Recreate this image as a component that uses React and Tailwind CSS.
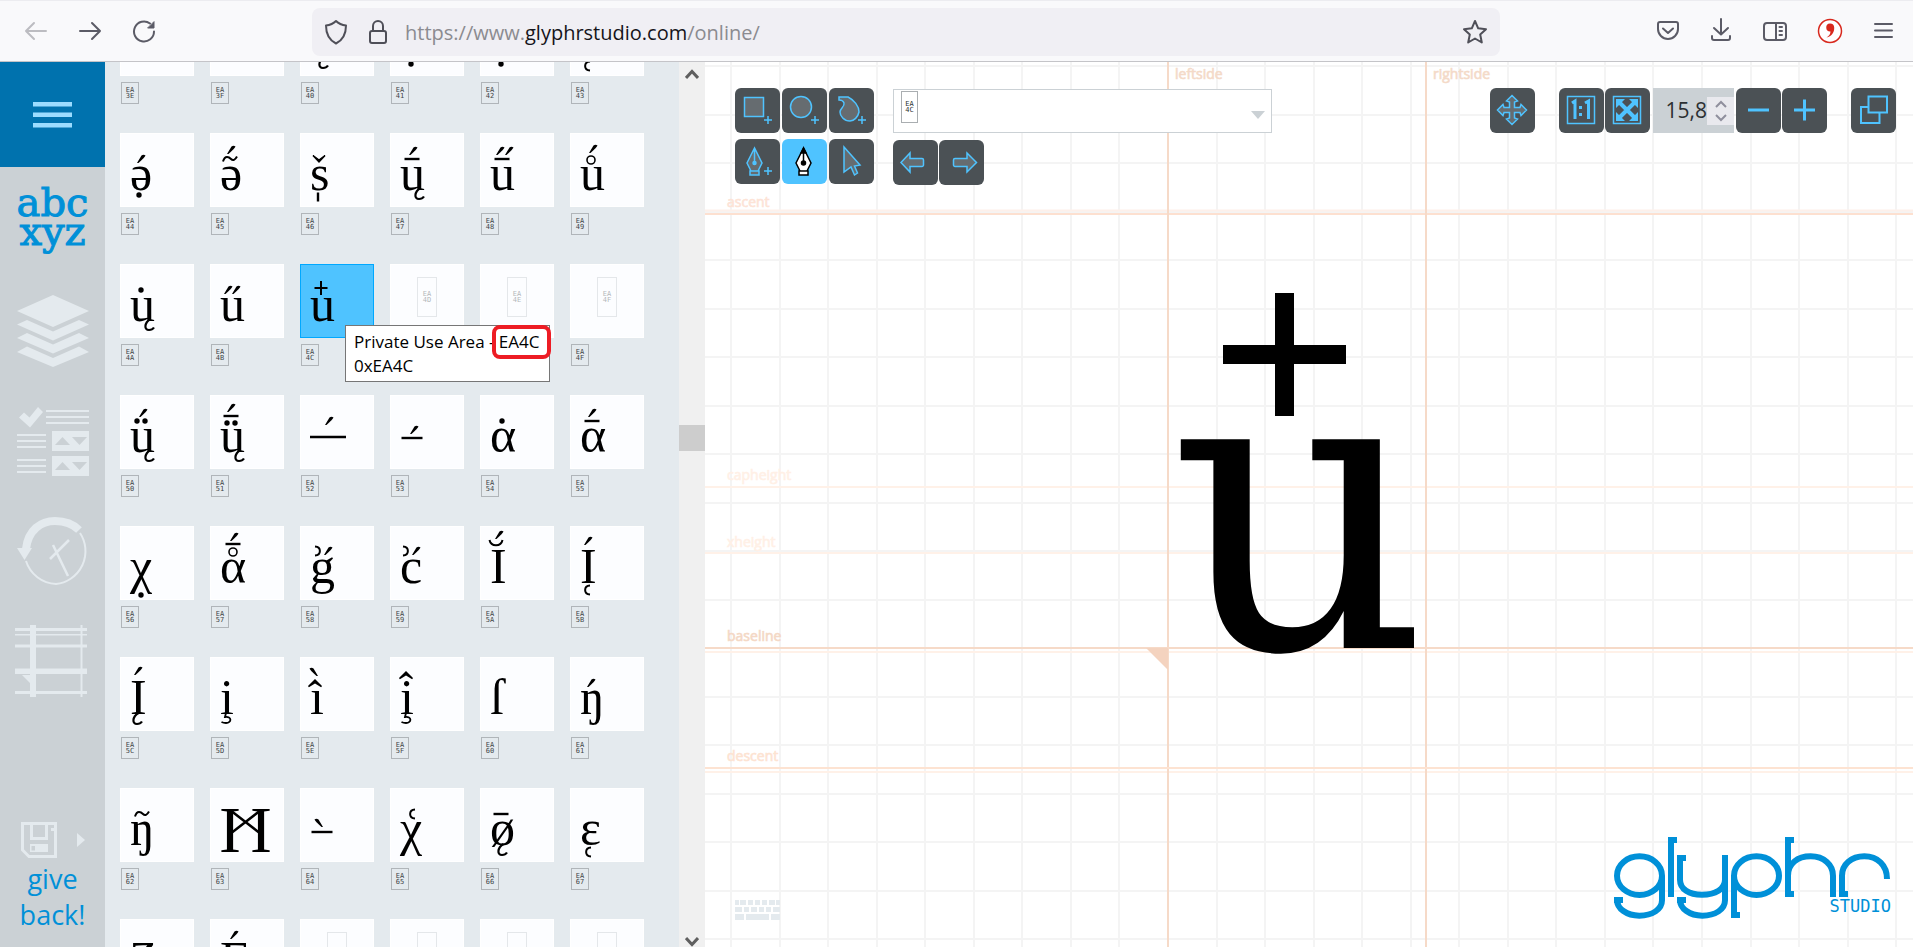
import React from "react";

const FONT = "font-['Open_Sans','Noto_Sans',sans-serif]";

// Diacritic shapes, drawn around their own centre.
const markShapes = {
  acute: <path d="M-4 4L0.500 -3.500Q2.500 -5 4.500 -3.500Q4 -2 -2.500 4Z" />,
  grave: <path d="M4 4L-0.500 -3.500Q-2.500 -5 -4.500 -3.500Q-4 -2 2.500 4Z" />,
  macron: <path d="M-7.500 -1.200H7.500V1.200H-7.500Z" />,
  dot: <circle r="2.700" />,
  ring: <circle r="4" fill="none" stroke="#000" strokeWidth="1.600" />,
  plus: <path d="M-6.500 0H6.500M0 -7V7" fill="none" stroke="#000" strokeWidth="2" />,
  bar: <path d="M-1.200 -4.500H1.200V4.500H-1.200Z" />,
  tilde: <path d="M-7 2.500C-5 -4 -1 -2 1 0C3 2 5 1 7 -2.500" fill="none" stroke="#000" strokeWidth="2" />,
  caron: <path d="M-6 -3.500L0 3L6 -3.500L0 1Z" stroke="#000" strokeWidth="1.500" />,
  hat: <path d="M-6.500 3.500L0 -3L6.500 3.500L0 -0.500Z" stroke="#000" strokeWidth="1.500" />,
  breve: <path d="M-6.500 -3C-5 4 5 4 6.500 -3" fill="none" stroke="#000" strokeWidth="2" />,
  ogonek: <path d="M1.500 -6C-5 -2 -5 5 0 5C2.500 5 4 4 5 2.500" fill="none" stroke="#000" strokeWidth="2.200" />,
  cedilla: <path d="M0 -5L-1 -1C6 -2 6 5 0 5C-2 5 -3.500 4.500 -4.500 4" fill="none" stroke="#000" strokeWidth="1.800" />,
  halfLeft: <path d="M3 -4.500C-3.500 -4 -3.500 4 3 4.500" fill="none" stroke="#000" strokeWidth="2" />,
  halfRight: <path d="M-3 -4.500C3.500 -4 3.500 4 -3 4.500" fill="none" stroke="#000" strokeWidth="2" />,
  longDash: <path d="M-18 -1.300H18V1.300H-18Z" />,
  dash: <path d="M-10.500 -1.200H10.500V1.200H-10.500Z" />,
};

const glyphs = {
  0xea3e: { marks: [] },
  0xea3f: { marks: [] },
  0xea40: { marks: [["ogonek", 23, 61]] },
  0xea41: { marks: [["dot", 21, 62]] },
  0xea42: { marks: [["dot", 21, 62]] },
  0xea43: { marks: [["halfLeft", 17, 64]] },
  0xea44: { base: "ə", marks: [["acute", 21, 26], ["dot", 19, 62]] },
  0xea45: { base: "ə", marks: [["acute", 21, 17], ["tilde", 20, 26]] },
  0xea46: { base: "s", marks: [["caron", 19, 26], ["bar", 18, 64]] },
  0xea47: { base: "u", marks: [["acute", 23, 18], ["macron", 22, 26], ["ogonek", 29, 61]] },
  0xea48: { base: "u", marks: [["acute", 20, 18], ["acute", 29, 18], ["macron", 22, 26]] },
  0xea49: { base: "u", marks: [["acute", 23, 16], ["ring", 21, 27]] },
  0xea4a: { base: "u", marks: [["dot", 21, 26], ["ogonek", 29, 61]] },
  0xea4b: { base: "u", marks: [["acute", 18, 26], ["acute", 26, 26]] },
  0xea4c: { base: "u", marks: [["plus", 21, 24]] },
  0xea50: { base: "u", marks: [["acute", 23, 18], ["dot", 17, 26], ["dot", 25, 26], ["ogonek", 29, 61]] },
  0xea51: { base: "u", marks: [["acute", 21, 13], ["macron", 21, 21], ["dot", 17, 28], ["dot", 25, 28], ["ogonek", 29, 61]] },
  0xea52: { marks: [["acute", 29, 26], ["longDash", 28, 42]] },
  0xea53: { marks: [["acute", 24, 35], ["dash", 22, 43]] },
  0xea54: { base: "α", marks: [["dot", 22, 26]] },
  0xea55: { base: "α", marks: [["acute", 22, 18], ["macron", 22, 26]] },
  0xea56: { base: "χ", marks: [["dot", 21, 69]] },
  0xea57: { base: "α", marks: [["acute", 24, 11], ["macron", 23, 18], ["ring", 23, 26]] },
  0xea58: { base: "g", marks: [["halfRight", 18, 25], ["acute", 28, 25]] },
  0xea59: { base: "c", marks: [["halfRight", 16, 25], ["acute", 26, 25]] },
  0xea5a: { base: "I", marks: [["acute", 19, 9], ["breve", 16, 17]] },
  0xea5b: { base: "I", marks: [["acute", 18, 15], ["halfLeft", 17, 64]] },
  0xea5c: { base: "I", marks: [["acute", 18, 14], ["ogonek", 17, 62]] },
  0xea5d: { base: "i", marks: [["cedilla", 16, 61]] },
  0xea5e: { base: "ı", marks: [["grave", 14, 15], ["hat", 15, 26]] },
  0xea5f: { base: "i", marks: [["hat", 16, 18], ["cedilla", 16, 61]] },
  0xea60: { base: "ſ", marks: [] },
  0xea61: { base: "ŋ", marks: [["acute", 21, 26]] },
  0xea62: { base: "ŋ", marks: [["tilde", 22, 26]] },
  0xea63: { rune: true, marks: [] },
  0xea64: { marks: [["grave", 19, 35], ["dash", 22, 44]] },
  0xea65: { base: "χ", marks: [["halfLeft", 22, 26]] },
  0xea66: { base: "ø", marks: [["macron", 21, 26], ["ogonek", 22, 62]] },
  0xea67: { base: "ε", marks: [["halfLeft", 18, 64]] },
  0xea68: { base: "Ʒ", marks: [] },
  0xea69: { base: "E", marks: [["acute", 24, 16]] },
};

const FIRST = 0xea3e;
const LAST_ROW = 0xea68;
const codes = Array.from({ length: 48 }, (_, i) => FIRST + i);

function Code({ code, blank, className }) {
  const hex = code.toString(16).toUpperCase();
  return (
    <span className={`flex flex-col items-center justify-center border font-['DejaVu_Sans_Mono',monospace] text-[7px] leading-[6px] ${className}`}>
      {!blank && (
        <>
          <span>{hex.slice(0, 2)}</span>
          <span>{hex.slice(2)}</span>
        </>
      )}
    </span>
  );
}

function GlyphDrawing({ glyph }) {
  return (
    <svg width="72" height="72" viewBox="1 1 72 72" className="block font-['Liberation_Serif','DejaVu_Serif',serif] text-[50px]">
      {glyph.base && <text x="10" y="57">{glyph.base}</text>}
      {glyph.rune && (
        <g>
          <g className="text-[66px]">
            <text x="9" y="64">I</text>
            <text x="40" y="64">I</text>
          </g>
          <path d="M20 22L51 46M51 22L20 46" stroke="#000" strokeWidth="2.500" />
        </g>
      )}
      {glyph.marks.map(([name, x, y], i) => (
        <g key={i} transform={`translate(${x} ${y})`}>{markShapes[name]}</g>
      ))}
    </svg>
  );
}

function Tooltip() {
  return (
    <div role="tooltip" className={`absolute top-[61px] left-[45px] z-10 w-[205px] border border-[#767676] bg-white pt-[4px] pb-[3px] pl-2 text-[17px] leading-6 whitespace-nowrap text-black ${FONT}`}>
      Private Use Area - EA4C
      <br />
      0xEA4C
      <span className="absolute -top-px -right-[2px] h-[34px] w-[59px] rounded-lg border-4 border-[#ed1c24]" />
    </div>
  );
}

function GlyphCell({ code }) {
  const glyph = glyphs[code];
  const selected = code === 0xea4c;
  const underTooltip = code === 0xea4d || code === 0xea4e;
  return (
    <div className="relative">
      <button
        aria-label={`Glyph ${code.toString(16).toUpperCase()}`}
        className={`block h-[74px] w-[74px] overflow-hidden border text-left ${selected ? "border-[#00a8ff] bg-[#4fc3ff]" : "border-white bg-[#fcfdff]"}`}
      >
        {glyph ? (
          <GlyphDrawing glyph={glyph} />
        ) : (
          <span className="flex h-full items-start justify-center pt-3">
            <Code code={code} blank={code >= LAST_ROW} className="h-[40px] w-[20px] border-[#e4e7ea] text-[#b4b8bb]" />
          </span>
        )}
      </button>
      {code < LAST_ROW && (
        <Code code={code} blank={underTooltip} className="mt-[6px] ml-px h-[22px] w-[18px] border-[#b0b5b9] text-[#3f4548]" />
      )}
      {selected && <Tooltip />}
    </div>
  );
}

function BrowserBar() {
  const s = { fill: "none", stroke: "#5b5b66", strokeWidth: 2, strokeLinecap: "round", strokeLinejoin: "round" };
  return (
    <header className="flex h-[62px] shrink-0 items-center border-t border-b border-t-[#ececf0] border-b-[#c4c4c8] bg-[#f9f9fb]">
      <nav className="flex w-[312px] shrink-0 items-center gap-[26px] pl-5" aria-label="Browser">
        <button aria-label="Back"><svg width="32" height="28" {...s} stroke="#bcbcc1"><path d="M26 14H6M14 6L6 14L14 22" /></svg></button>
        <button aria-label="Forward"><svg width="28" height="28" {...s}><path d="M2 14H22M14 6L22 14L14 22" /></svg></button>
        <button aria-label="Reload"><svg width="26" height="28" {...s}><path d="M18 6.500A10 10 0 1 0 22 14.500" /><path d="M22 5V11H16Z" fill="#5b5b66" strokeWidth="1" /></svg></button>
      </nav>
      <form className="mt-[2px] flex h-12 w-[1188px] min-w-0 items-center rounded-lg bg-[#f0eff4] px-3">
        <svg width="24" height="28" className="shrink-0" {...s} stroke="#4f4f58"><path d="M12 3C15 6 18 7 22 7.500C22 16 19 22 12 25.500C5 22 2 16 2 7.500C6 7 9 6 12 3Z" /></svg>
        <svg width="20" height="28" className="ml-[20px] shrink-0" {...s} stroke="#4f4f58"><rect x="2" y="13" width="16" height="12" rx="2" /><path d="M5 13V8A5 5 0 0 1 15 8V13" /></svg>
        <a href="#online" className={`ml-[17px] flex-1 pt-px text-[20px] leading-7 text-[#8b8b90] ${FONT}`}>
          https://www.<span className="text-[#15141a]">glyphrstudio.com</span>/online/
        </a>
        <button type="button" aria-label="Bookmark"><svg width="26" height="26" {...s} stroke="#4f4f58"><path d="M13 2L16.200 9.300L24 10.200L18.200 15.500L19.800 23.500L13 19.500L6.200 23.500L7.800 15.500L2 10.200L9.800 9.300Z" /></svg></button>
      </form>
      <div className="ml-auto flex items-center gap-[27px] pr-[18px]">
        <button aria-label="Pocket"><svg width="26" height="26" {...s}><path d="M5 4H21A2 2 0 0 1 23 6V11A10 10 0 0 1 3 11V6A2 2 0 0 1 5 4Z M8 10.500L13 15L18 10.500" /></svg></button>
        <button aria-label="Downloads"><svg width="26" height="26" {...s}><path d="M13 1V16M6 10L13 16.500L20 10M4 18V20A2 2 0 0 0 6 22H20A2 2 0 0 0 22 20V18" /></svg></button>
        <button aria-label="Sidebar"><svg width="28" height="26" {...s}><rect x="3" y="5" width="22" height="17" rx="3" /><path d="M15 5V22M18.500 9H21M18.500 13H21M18.500 17H21" /></svg></button>
        <button aria-label="Extension"><svg width="28" height="26"><circle cx="14" cy="13" r="11.500" fill="#fff" stroke="#d8281d" strokeWidth="1.500" /><path d="M14 5.500A4 4 0 1 0 14.500 13.500C14.500 16 13 18 10.500 19.500C15.500 18.500 18.500 14.500 18.200 9.500A4.200 4.200 0 0 0 14 5.500Z" fill="#d8281d" /></svg></button>
        <button aria-label="Menu"><svg width="24" height="26" {...s}><path d="M4 6H21M4 12.500H21M4 19H21" /></svg></button>
      </div>
    </header>
  );
}

function Sidebar() {
  const item = "flex h-[111px] w-full justify-center pt-[17px]";
  return (
    <aside className="flex w-[105px] shrink-0 flex-col bg-[#cbd1d5]">
      <button aria-label="Menu" className="flex h-[105px] w-full items-center justify-center bg-[#0072ae]">
        <svg width="39" height="28" fill="#9bdcff"><path d="M0 1H39V5.500H0ZM0 11.500H39V16H0ZM0 22H39V26.500H0Z" /></svg>
      </button>
      <nav aria-label="Panels" className="flex flex-col text-[#e4eaee]">
        <button className="flex h-[111px] w-full flex-col items-center pt-[21px] font-['DejaVu_Serif',serif] text-[40px] leading-[29px] text-[#0090d8] [-webkit-text-stroke:1px_#0090d8]">
          <span>abc</span>
          <span>xyz</span>
        </button>
        <button aria-label="Layers" className={item}>
          <svg width="72" height="74" fill="currentColor">
            <path d="M36 0L72 16L36 32L0 16Z" />
            <path d="M10 25L36 36.500L62 25L72 29.500L36 45.500L0 29.500Z" />
            <path d="M10 38L36 49.500L62 38L72 43L36 58.500L0 43Z" />
            <path d="M10 51.500L36 63L62 51.500L72 57L36 72L0 57Z" />
          </svg>
        </button>
        <button aria-label="Attributes" className={item}>
          <svg width="72" height="74" fill="currentColor">
            <path d="M2 11.500L7 6.500L12.500 11.500L21 1L26 6L13 21.500Z" />
            <path d="M29 4H72V6H29ZM29 10H72V12H29ZM29 16H72V18H29ZM0 28H29V30H0ZM0 34H29V36H0ZM0 40H29V42H0ZM0 53H29V55H0ZM0 59H29V61H0ZM0 65H29V67H0Z" />
            <path d="M35 25H72V45H35ZM35 50H72V70H35Z" />
            <path d="M38 39H53L45.500 31ZM55 31H70L62.500 39ZM38 64H53L45.500 56ZM55 56H70L62.500 64Z" fill="#cbd1d5" />
          </svg>
        </button>
        <button aria-label="History" className={item}>
          <svg width="72" height="74" fill="none" stroke="currentColor">
            <path d="M9 32C11 13 24 4 38 4C48 4 56 7 62 13" strokeWidth="8" />
            <path d="M0 31H15L7.500 43Z" fill="currentColor" stroke="none" />
            <path d="M63 16A33 33 0 0 1 39 67A33 33 0 0 1 9 44" strokeWidth="2" />
            <path d="M33 42L52 23M36 28L51 59" strokeWidth="2.500" />
          </svg>
        </button>
        <button aria-label="Guides" className="flex h-[111px] w-full justify-center pt-[13px] pr-[3px]">
          <svg width="72" height="74" fill="currentColor">
            <path d="M0 4H72V7H0ZM0 10H72V11.500H0ZM0 20.500H72V23.500H0ZM0 44.500H72V50H0ZM0 67H72V70H0ZM15 1H21V73H15ZM65.500 1H67.500V73H65.500ZM7 51H15V59Z" />
          </svg>
        </button>
      </nav>
      <div className="mt-auto flex flex-col items-center">
        <div className="flex w-full items-center gap-5 pl-[21px] text-[#e4eaee]">
          <button aria-label="Save">
            <svg width="36" height="36" fill="none" stroke="currentColor" strokeWidth="3">
              <path d="M1.500 1.500H34.500V34.500H8L1.500 28Z" />
              <path d="M10.500 1.500V16.500H25.500V1.500" />
              <path d="M9 22H27V30H9ZM30 6H33V9H30Z" fill="currentColor" stroke="none" />
              <path d="M10.500 24H14V28.500H10.500Z" fill="#cbd1d5" stroke="none" />
            </svg>
          </button>
          <button aria-label="Save options"><svg width="8" height="14" fill="currentColor"><path d="M0 0L8 7L0 14Z" /></svg></button>
        </div>
        <a href="#give-back" className={`mt-[3px] mb-[14px] px-3 text-center text-[27px] leading-[36px] text-[#0090d8] ${FONT}`}>give back!</a>
      </div>
    </aside>
  );
}

function GlyphPanel() {
  return (
    <section aria-label="Glyphs" className="flex w-[600px] shrink-0 bg-[#e4eaee]">
      <div className="min-h-0 flex-1 overflow-hidden pl-[15px]">
        <div className="-mt-[60px] grid grid-cols-[repeat(6,74px)] gap-x-4 gap-y-[29px]">
          {codes.map((c) => <GlyphCell key={c} code={c} />)}
        </div>
      </div>
      <div className="flex w-[26px] flex-col items-center bg-[#f0f0f0] pt-[6px]">
        <svg width="14" height="12" fill="none" stroke="#5f5f5f" strokeWidth="3"><path d="M1 10L7 3.500L13 10" /></svg>
        <div className="w-full flex-1 pt-[345px]">
          <div className="h-[26px] w-full bg-[#cdcdcd]" />
        </div>
        <svg width="14" height="10" fill="none" stroke="#5f5f5f" strokeWidth="3"><path d="M1 1L7 7.500L13 1" /></svg>
      </div>
    </section>
  );
}

function Tool({ label, active, children }) {
  return (
    <button
      aria-label={label}
      className={`flex h-[45px] w-[45px] items-center justify-center rounded-md ${active ? "bg-[#4fc3ff]" : "bg-[#4b5155]"}`}
    >
      <svg width="45" height="45" fill="#666c70" stroke="#4fc3ff" strokeWidth="1.500">{children}</svg>
    </button>
  );
}

const PLUS = "M33 28V36M29 32H37";
const NIB = "M19.500 9V24M19.500 9L12 24L16 32H23L27 24ZM15 32H24V36H15Z";

function Canvas() {
  const vertical = Array.from({ length: 25 }, (_, i) => 26 + Math.round(i * 48.55));
  const horizontal = Array.from({ length: 19 }, (_, i) => 4 + Math.round(i * 48.52));
  return (
    <svg className="absolute inset-0 h-full w-full" role="img" aria-label="Glyph canvas">
      <g stroke="#f4f4f4" strokeWidth="2">
        {vertical.map((x) => <line key={x} x1={x} x2={x} y1="0" y2="100%" />)}
        {horizontal.map((y) => <line key={y} x1="0" x2="100%" y1={y} y2={y} />)}
      </g>
      <g strokeWidth="2">
        <path d="M0 148.500H1300" stroke="#fdf0ea" />
        <path d="M0 152H1300" stroke="#fde0d0" />
        <path d="M0 425H1300M0 491H1300M0 590H1300M0 710H1300" stroke="#fff1e8" />
        <path d="M0 586H1300M463 0V900M721 0V900" stroke="#f6dac8" />
        <path d="M0 706H1300" stroke="#fde3d2" />
      </g>
      <path d="M441 586H463V608Z" fill="#f4d3bf" />
      <g className={`text-[14px] [stroke-width:0.6px] ${FONT}`}>
        <text x="470" y="17" fill="#f4dac8" stroke="#f4dac8">leftside</text>
        <text x="728" y="17" fill="#f4dac8" stroke="#f4dac8">rightside</text>
        <text x="22" y="145" fill="#fde3d6" stroke="#fde3d6">ascent</text>
        <text x="22" y="418" fill="#fff0e6" stroke="#fff0e6">capheight</text>
        <text x="22" y="485" fill="#fff0e6" stroke="#fff0e6">xheight</text>
        <text x="22" y="579" fill="#f4d8c5" stroke="#f4d8c5">baseline</text>
        <text x="22" y="699" fill="#fde3d2" stroke="#fde3d2">descent</text>
      </g>
      <rect x="518" y="283" width="123" height="19" />
      <rect x="570" y="231" width="19" height="123" />
      <text x="465" y="586" className="font-['DejaVu_Serif',serif] text-[402px]">u</text>
    </svg>
  );
}

function Logo() {
  return (
    <svg width="277" height="82" viewBox="0 0 831 246" className="block" fill="none" stroke="#0090d8" strokeWidth="18" role="img" aria-label="glyphr">
      <ellipse cx="76.500" cy="116" rx="67.500" ry="58" />
      <path d="M144 116V190C144 217 115 236 76 236C38 236 9 215 9 188" />
      <path d="M171 0V180" />
      <path d="M198 60V128C198 156 225 173 264 173C304 173 333 156 333 128" />
      <path d="M333 54V190C333 217 304 236 265 236C227 236 198 215 198 188" />
      <ellipse cx="427.500" cy="116" rx="67.500" ry="58" />
      <path d="M360 116V243" />
      <path d="M522 0V180M522 116C522 80 550 58 590 58C630 58 657 84 657 116V180" />
      <path d="M684 180V116C684 82 712 58 751 58C790 58 819 84 819 126" />
      <path d="M0 180H27V198H0ZM162 0H189V18H162ZM189 54H216V72H189ZM189 180H216V198H189ZM351 225H378V243H351ZM513 0H540V18H513ZM513 162H540V180H513ZM675 162H702V180H675Z" fill="#0090d8" stroke="none" />
    </svg>
  );
}

function Keyboard() {
  return (
    <button aria-label="Keyboard shortcuts">
      <svg width="45" height="21" className="block" fill="#e4eaee">
        <path d="M0 0H4V5H0ZM5 0H11V5H5ZM13 0H18V5H13ZM20 0H25V5H20ZM27 0H32V5H27ZM34 0H40V5H34ZM41 0H45V5H41ZM0 7H7V12H0ZM9 7H14V12H9ZM16 7H22V12H16ZM24 7H29V12H24ZM31 7H36V12H31ZM38 7H45V12H38ZM0 14H9V20H0ZM11 14H34V20H11ZM36 14H45V20H36Z" />
      </svg>
    </button>
  );
}

function Editor() {
  return (
    <main className="relative flex min-w-0 flex-1 flex-col justify-between overflow-hidden bg-white">
      <Canvas />
      <div className="relative flex items-start pt-[26px] pr-[17px] pl-[30px]">
        <div className="grid grid-cols-3 gap-x-[2px] gap-y-[6px]">
          <Tool label="Rectangle"><path d="M9.500 9.500H28.500V28.500H9.500Z" /><path d={PLUS} /></Tool>
          <Tool label="Oval"><circle cx="19" cy="19" r="10.500" /><path d={PLUS} /></Tool>
          <Tool label="Path shape"><path d="M10 9H19C25 12 30 18 30 24C29 29 25 33 21 33C15 33 11 28 11 24C11 20 16 19 15 15C14 12 12 12 10 12Z" /><path d={PLUS} /></Tool>
          <Tool label="New path"><path d={NIB} /><circle cx="19.500" cy="24" r="1.500" fill="#4fc3ff" /><path d={PLUS} /></Tool>
          <Tool label="Path edit" active><g stroke="#000" fill="#fff" transform="translate(2 0)"><path d={NIB} /><path d="M19.500 9L17 14H22Z" fill="#000" /><circle cx="19.500" cy="24" r="2" fill="#000" /></g></Tool>
          <Tool label="Shape edit"><path d="M15 8L31 26L25.500 27L28.500 34L25.500 36L22 28L15 33Z" /></Tool>
        </div>
        <div className="ml-[19px] flex flex-col gap-[7px] pt-px">
          <div className="flex h-[44px] w-[379px] items-start border border-[#cbd1d5] bg-white pl-[7px] pt-px">
            <Code code={0xea4c} className="h-[32px] w-[17px] border-[#aaaeb1] text-[#2b2f32]" />
            <select aria-label="Selected glyph" className="h-full flex-1 appearance-none bg-transparent outline-none" defaultValue="EA4C">
              <option value="EA4C" label=" " />
            </select>
            <svg width="14" height="8" className="mt-[20px] mr-[6px]" fill="#cbd1d5"><path d="M0 0H14L7 8Z" /></svg>
          </div>
          <div className="flex gap-px">
            <Tool label="Undo"><path d="M8 22.500L17 13V18.500H29A1.500 1.500 0 0 1 30.500 20V25A1.500 1.500 0 0 1 29 26.500H17V32Z" /></Tool>
            <Tool label="Redo"><path d="M37.500 22.500L28 13V18.500H16A1.500 1.500 0 0 0 14.500 20V25A1.500 1.500 0 0 0 16 26.500H28V32Z" /></Tool>
          </div>
        </div>
        <div className="ml-auto flex">
          <Tool label="Pan"><path d="M22 7.500L27.500 13L24.500 14V19.500H30L31 16.500L36.500 22L31 27.500L30 24.500H24.500V30L27.500 31L22 36.500L16.500 31L19.500 30V24.500H14L13 27.500L7.500 22L13 16.500L14 19.500H19.500V14L16.500 13Z" /></Tool>
          <div className="ml-6 flex gap-px">
            <Tool label="Actual size"><path d="M8.500 8.500H35.500V35.500H8.500Z" fill="none" /><path d="M13 15L16 13V31M26 15L29.500 13V31" fill="none" strokeWidth="3" /><path d="M20 18H23V21H20ZM20 25H23V28H20Z" fill="#4fc3ff" stroke="none" /></Tool>
            <Tool label="Fit"><path d="M8.500 8.500H35.500V35.500H8.500Z" fill="none" /><path d="M14 14L30 30M30 14L14 30" strokeWidth="4" /><path d="M11 11H20L11 20ZM33 11V20L24 11ZM11 33V24L20 33ZM33 33H24L33 24Z" fill="#4fc3ff" stroke="none" /></Tool>
          </div>
          <div className="ml-[3px] flex h-[45px] w-[81px] items-center bg-[#cbd1d5]">
            <input aria-label="Zoom" defaultValue="15,8" className={`w-[54px] min-w-0 bg-transparent text-right text-[21px] text-[#2b2f32] outline-none ${FONT}`} />
            <div className="flex h-7 w-[27px] flex-col items-center justify-center gap-[6px] bg-[#e9e9ee]">
              <button aria-label="Increase zoom"><svg width="12" height="8" className="block" fill="none" stroke="#8f8f9d" strokeWidth="2"><path d="M1 7L6 2L11 7" /></svg></button>
              <button aria-label="Decrease zoom"><svg width="12" height="8" className="block" fill="none" stroke="#8f8f9d" strokeWidth="2"><path d="M1 1L6 6L11 1" /></svg></button>
            </div>
          </div>
          <div className="ml-[2px] flex gap-px">
            <Tool label="Zoom out"><path d="M12 22H33" strokeWidth="3" /></Tool>
            <Tool label="Zoom in"><path d="M12 22H33M22.500 11.500V32.500" strokeWidth="3" /></Tool>
          </div>
          <div className="ml-6"><Tool label="Pop out"><path d="M17.500 8.500H36V24.500H17.500ZM17.500 19H10V35H28.500V24.500" fill="none" strokeWidth="2" /></Tool></div>
        </div>
      </div>
      <div className="relative flex items-end justify-between pr-[22px] pb-[26px] pl-[30px]">
        <Keyboard />
        <div className="relative pb-[2px]">
          <Logo />
          <span className="absolute right-0 bottom-[5px] font-['DejaVu_Sans_Mono',monospace] text-[17px] leading-5 text-[#0090d8]">STUDIO</span>
        </div>
      </div>
    </main>
  );
}

export default function App() {
  return (
    <div className="flex h-screen flex-col overflow-hidden">
      <BrowserBar />
      <div className="flex min-h-0 flex-1">
        <Sidebar />
        <GlyphPanel />
        <Editor />
      </div>
    </div>
  );
}
